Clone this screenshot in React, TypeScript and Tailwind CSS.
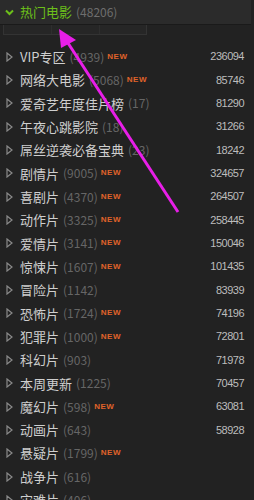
import React from "react";

const rows: [string, string | null, boolean, string][] = [
  ["VIP专区", "4939", true, "236094"],
  ["网络大电影", "5068", true, "85746"],
  ["爱奇艺年度佳片榜", "17", false, "81290"],
  ["午夜心跳影院", "18", false, "31266"],
  ["屌丝逆袭必备宝典", "23", false, "18242"],
  ["剧情片", "9005", true, "324657"],
  ["喜剧片", "4370", true, "264507"],
  ["动作片", "3325", true, "258445"],
  ["爱情片", "3141", true, "150046"],
  ["惊悚片", "1607", true, "101435"],
  ["冒险片", "1142", false, "83939"],
  ["恐怖片", "1724", true, "74196"],
  ["犯罪片", "1000", true, "72801"],
  ["科幻片", "903", false, "71978"],
  ["本周更新", "1225", false, "70457"],
  ["魔幻片", "598", true, "63081"],
  ["动画片", "643", false, "58928"],
  ["悬疑片", "1799", true, ""],
  ["战争片", "616", false, ""],
  ["灾难片", "406", false, ""],
];

const Tri = () => (
  <svg width="7" height="10" viewBox="0 0 7 10" className="shrink-0">
    <path d="M1 1 L6 5 L1 9 Z" fill="none" stroke="#8a8a8a" strokeWidth="1.2" />
  </svg>
);

export default function App() {
  return (
    <div
      className="relative w-[254px] h-[500px] overflow-hidden bg-[#222222]"
      style={{ fontFamily: '"Noto Sans CJK SC", "Liberation Sans", sans-serif' }}
    >
      <div className="flex items-center h-[25px] w-[251px] bg-[#2b2b2b] border-b border-[#1a1a1a] pl-[5px]">
        <svg width="9" height="7" viewBox="0 0 9 7" className="mr-[6px]">
          <path d="M1 1.5 L4.5 5 L8 1.5" fill="none" stroke="#6cbf1a" strokeWidth="2" />
        </svg>
        <span className="text-[13px] text-[#6cbf1a]">热门电影</span>
        <span className="text-[12px] text-[#6e6e6e] ml-[4px]">(48206)</span>
      </div>
      <div className="flex ml-[3px] w-[144px] h-[10px] bg-[#262626] border border-t-0 border-[#333]">
        <div className="w-[48px] border-r border-[#2e2e2e]" />
        <div className="w-[48px] border-r border-[#2e2e2e]" />
        <div className="flex-1" />
      </div>
      <div className="flex flex-col pt-[10px]">
        {rows.map(([name, count, isNew, num], i) => (
          <div key={i} className="flex items-center h-[23.33px] pl-[6px] pr-[10px]">
            <Tri />
            <span className="ml-[7px] text-[13px] text-[#cfcfcf] whitespace-nowrap">{name}</span>
            {count && (
              <span className="ml-[4px] text-[12px] text-[#666666] whitespace-nowrap">({count})</span>
            )}
            {isNew && (
              <span className="ml-[3px] text-[8px] font-bold text-[#e0632a] tracking-[0.5px]" style={{ fontFamily: '"Liberation Sans", sans-serif' }}>
                NEW
              </span>
            )}
            <span className="ml-auto text-[11px] tracking-[-0.5px] text-[#bdbdbd]" style={{ fontFamily: '"Liberation Sans", sans-serif' }}>
              {num}
            </span>
          </div>
        ))}
      </div>
      <svg className="absolute left-0 top-0 pointer-events-none" width="254" height="500">
        <line x1="66" y1="40" x2="178" y2="212" stroke="#e81ee8" strokeWidth="3" />
        <polygon points="59,29 61,48 76,40" fill="#e81ee8" />
      </svg>
    </div>
  );
}
